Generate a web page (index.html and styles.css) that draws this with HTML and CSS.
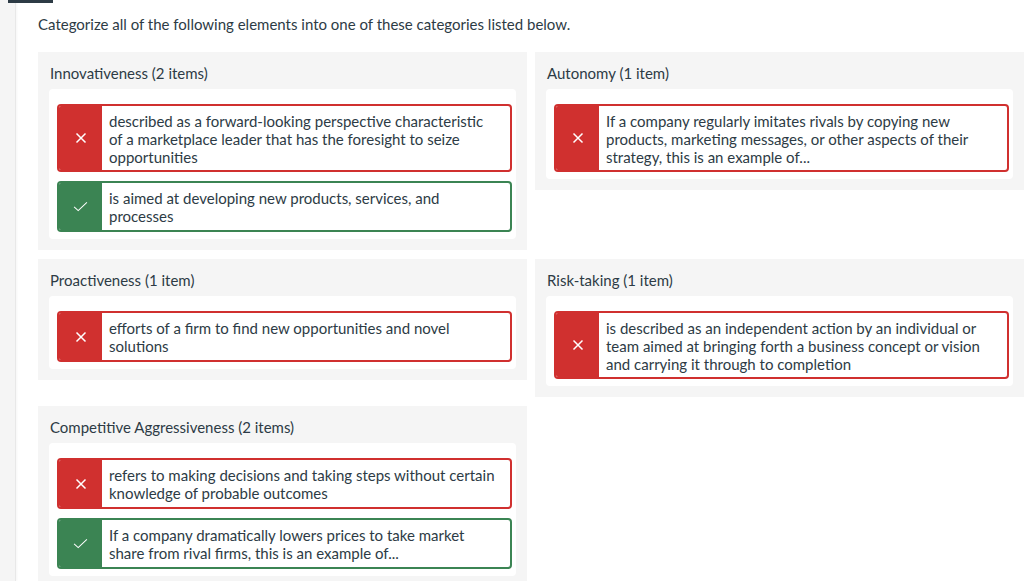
FILE: index.html
```html
<!DOCTYPE html>
<html>
<head>
<meta charset="utf-8">
<link rel="stylesheet" href="styles.css">
</head>
<body>
<div class="page">
  <aside class="rail"><div class="rail-tab"></div></aside>
  <main class="main">
    <p class="prompt">Categorize all of the following elements into one of these categories listed below.</p>
    <div class="grid">
      <section class="cat">
        <h3 class="cat-title">Innovativeness (2 items)</h3>
        <div class="drop">
          <div class="item wrong">
            <div class="mark"><svg viewBox="0 0 12 12" width="12" height="12"><path d="M1.5 1.5L10.5 10.5M10.5 1.5L1.5 10.5" stroke="#fff" stroke-width="1.5" fill="none"/></svg></div>
            <div class="text">described as a forward-looking perspective characteristic of a marketplace leader that has the foresight to seize opportunities</div>
          </div>
          <div class="item right">
            <div class="mark"><svg viewBox="0 0 16 12" width="15" height="11"><path d="M1 6.5L5.5 10.5L15 1.5" stroke="#fff" stroke-width="1.1" fill="none"/></svg></div>
            <div class="text two">is aimed at developing new products, services, and processes</div>
          </div>
        </div>
      </section>
      <section class="cat">
        <h3 class="cat-title">Autonomy (1 item)</h3>
        <div class="drop">
          <div class="item wrong">
            <div class="mark"><svg viewBox="0 0 12 12" width="12" height="12"><path d="M1.5 1.5L10.5 10.5M10.5 1.5L1.5 10.5" stroke="#fff" stroke-width="1.5" fill="none"/></svg></div>
            <div class="text">If a company regularly imitates rivals by copying new products, marketing messages, or other aspects of their strategy, this is an example of...</div>
          </div>
        </div>
      </section>
      <section class="cat">
        <h3 class="cat-title">Proactiveness (1 item)</h3>
        <div class="drop">
          <div class="item wrong">
            <div class="mark"><svg viewBox="0 0 12 12" width="12" height="12"><path d="M1.5 1.5L10.5 10.5M10.5 1.5L1.5 10.5" stroke="#fff" stroke-width="1.5" fill="none"/></svg></div>
            <div class="text two">efforts of a firm to find new opportunities and novel solutions</div>
          </div>
        </div>
      </section>
      <section class="cat">
        <h3 class="cat-title">Risk-taking (1 item)</h3>
        <div class="drop">
          <div class="item wrong">
            <div class="mark"><svg viewBox="0 0 12 12" width="12" height="12"><path d="M1.5 1.5L10.5 10.5M10.5 1.5L1.5 10.5" stroke="#fff" stroke-width="1.5" fill="none"/></svg></div>
            <div class="text">is described as an independent action by an individual or team aimed at bringing forth a business concept or vision and carrying it through to completion</div>
          </div>
        </div>
      </section>
      <section class="cat">
        <h3 class="cat-title">Competitive Aggressiveness (2 items)</h3>
        <div class="drop">
          <div class="item wrong">
            <div class="mark"><svg viewBox="0 0 12 12" width="12" height="12"><path d="M1.5 1.5L10.5 10.5M10.5 1.5L1.5 10.5" stroke="#fff" stroke-width="1.5" fill="none"/></svg></div>
            <div class="text two">refers to making decisions and taking steps without certain knowledge of probable outcomes</div>
          </div>
          <div class="item right">
            <div class="mark"><svg viewBox="0 0 16 12" width="15" height="11"><path d="M1 6.5L5.5 10.5L15 1.5" stroke="#fff" stroke-width="1.1" fill="none"/></svg></div>
            <div class="text two">If a company dramatically lowers prices to take market share from rival firms, this is an example of...</div>
          </div>
        </div>
      </section>
    </div>
  </main>
</div>
</body>
</html>
```
FILE: styles.css
```css
html, body {
  margin: 0;
  padding: 0;
  background: #ffffff;
  overflow: hidden;
}
body {
  font-family: Lato, "Liberation Sans", sans-serif;
  color: #2d3b45;
  font-size: 15px;
}
.page {
  display: flex;
  height: 581px;
}
.rail {
  width: 15px;
  flex: none;
  background: #f5f5f5;
  border-right: 1px solid #e8e8e8;
  box-shadow: 1px 0 2px rgba(0,0,0,0.04);
}
.rail-tab {
  width: 45px;
  height: 3px;
  margin-left: 8px;
  background: #2d3b45;
  position: relative;
  z-index: 2;
}
.main {
  flex: 1;
  padding: 15px 0 0 22px;
  min-width: 0;
}
.prompt {
  margin: 0 0 19px 0;
  line-height: 18px;
  font-size: 15px;
}
.grid {
  display: grid;
  grid-template-columns: 489px 489px;
  column-gap: 8px;
  row-gap: 9px;
  align-items: start;
}
.cat {
  background: #f5f5f5;
  padding: 11px 11px 11px 11px;
}
.cat-title {
  margin: 0 0 6px 1px;
  font-weight: normal;
  font-size: 15px;
  line-height: 20px;
}
.drop {
  background: #ffffff;
  border-radius: 4px;
  padding: 15px 4px 7px 8px;
  display: flex;
  flex-direction: column;
  gap: 9px;
}
.item {
  display: flex;
  border: 2px solid;
  border-radius: 4px;
  background: #fff;
  overflow: hidden;
}
.item.wrong { border-color: #d0302f; }
.item.right { border-color: #3b8453; }
.mark {
  width: 43px;
  flex: none;
  display: flex;
  align-items: center;
  justify-content: center;
}
.wrong .mark { background: #d0302f; }
.right .mark { background: #3b8453; }
.text {
  flex: 1;
  padding: 6px 10px 4px 7px;
  line-height: 18px;
  font-size: 15px;
}
.text.two {
  padding-bottom: 5px;
}
```
